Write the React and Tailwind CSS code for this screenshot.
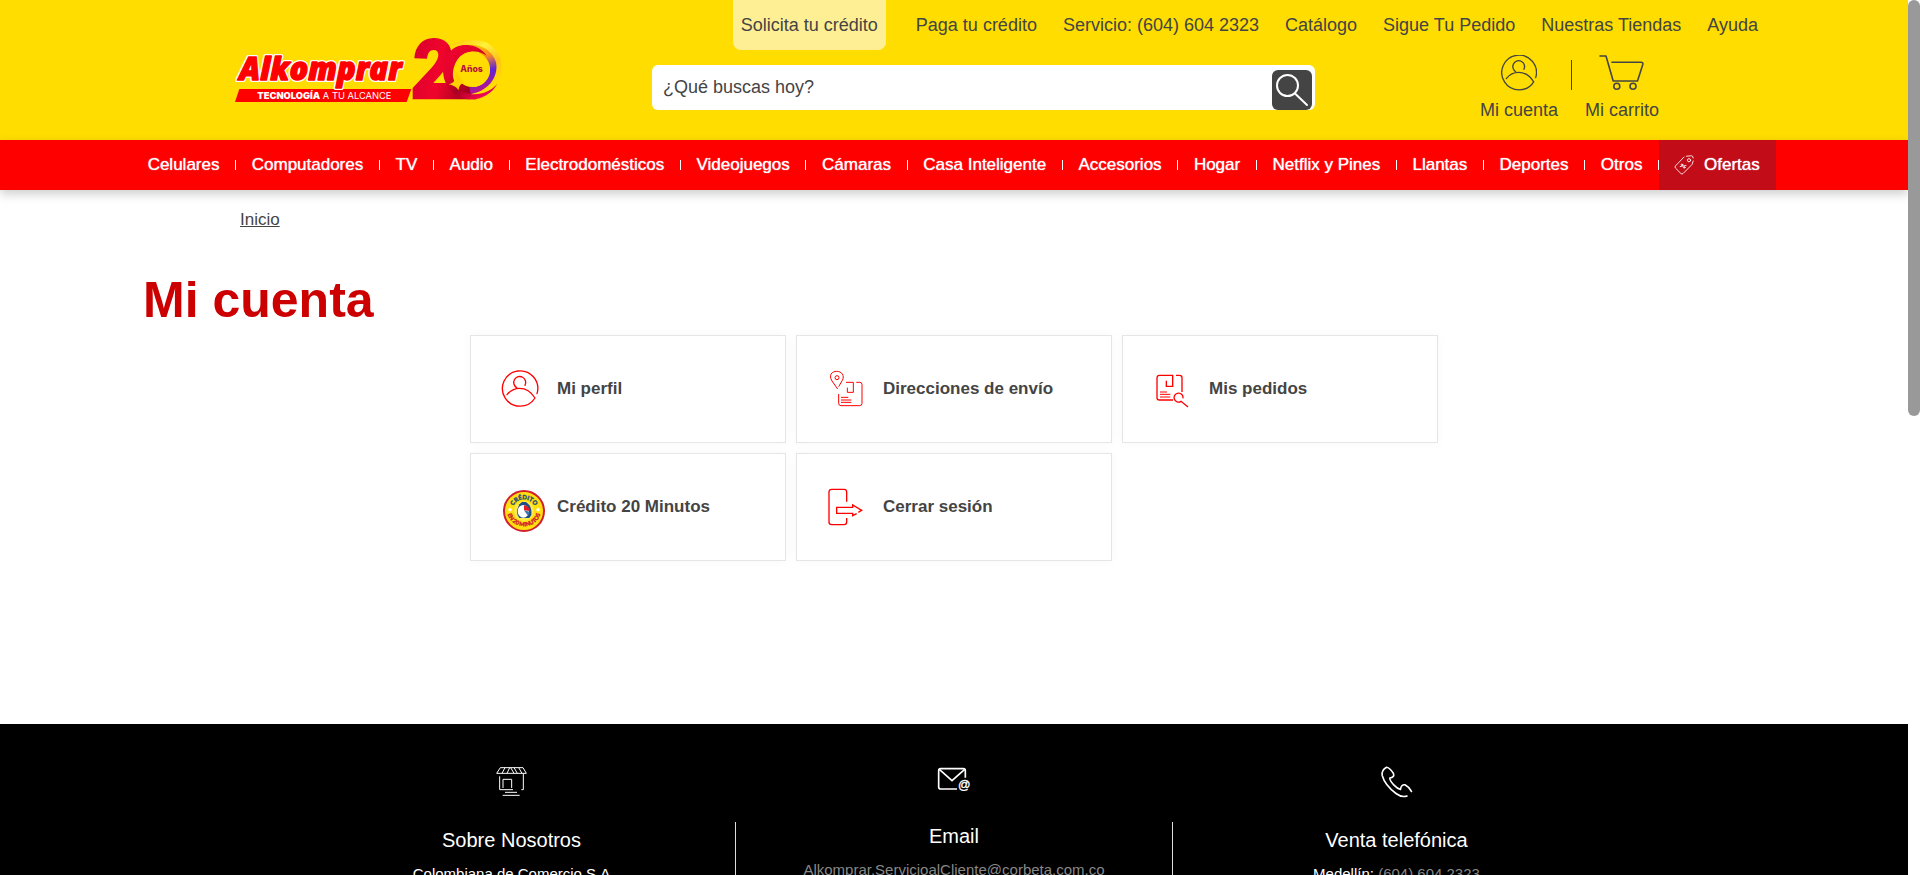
import React from "react";

const topLinks = [
  "Paga tu crédito",
  "Servicio: (604) 604 2323",
  "Catálogo",
  "Sigue Tu Pedido",
  "Nuestras Tiendas",
  "Ayuda",
];

const categories = [
  "Celulares",
  "Computadores",
  "TV",
  "Audio",
  "Electrodomésticos",
  "Videojuegos",
  "Cámaras",
  "Casa Inteligente",
  "Accesorios",
  "Hogar",
  "Netflix y Pines",
  "Llantas",
  "Deportes",
  "Otros",
];

function Logo() {
  return (
    <svg viewBox="45 30 819 210" className="h-[70px] w-[273px]" role="img" aria-label="Alkomprar 20 años">
      <defs>
        <linearGradient id="two" x1="0" y1="0" x2="1" y2="0.2">
          <stop offset="0" stopColor="#d8002c" />
          <stop offset="0.5" stopColor="#f0042c" />
          <stop offset="1" stopColor="#a3001f" />
        </linearGradient>
        <linearGradient id="ring" x1="0" y1="0" x2="1" y2="1">
          <stop offset="0" stopColor="#f2042f" />
          <stop offset="0.35" stopColor="#e3032d" />
          <stop offset="0.55" stopColor="#a8001f" />
          <stop offset="0.8" stopColor="#f0064a" />
          <stop offset="1" stopColor="#c8107a" />
        </linearGradient>
        <linearGradient id="sweep" x1="0" y1="0" x2="0.2" y2="1">
          <stop offset="0" stopColor="#ffd800" />
          <stop offset="0.35" stopColor="#ff8a1c" />
          <stop offset="0.65" stopColor="#5f22dc" />
          <stop offset="1" stopColor="#b5148c" />
        </linearGradient>
        <linearGradient id="halo" x1="0" y1="0" x2="0.4" y2="1">
          <stop offset="0" stopColor="#ffc400" />
          <stop offset="0.3" stopColor="#fff23a" />
          <stop offset="0.6" stopColor="#ffc21a" />
          <stop offset="1" stopColor="#ffe100" />
        </linearGradient>
      </defs>
      <polygon points="58,192 574,192 560,231 45,231" fill="#f00" />
      <g fontSize="93" fontWeight="800" fontStyle="italic" fontFamily='"Open Sans", sans-serif' fill="#f00" strokeLinejoin="round">
        <text x="58" y="165" stroke="#fff" strokeWidth="12" aria-hidden="true">
          Alkomprar
        </text>
        <text x="58" y="165" stroke="#f00" strokeWidth="4">
          Alkomprar
        </text>
      </g>
      <text x="112" y="221" fontSize="28" fontFamily="Inter, sans-serif" fill="#fff">
        <tspan fontWeight="900">TECNOLOGÍA</tspan>
        <tspan> A TU ALCANCE</tspan>
      </text>
      <path d="M583 100C585 64 607 39 641 39C675 39 696 61 694 90C692 116 672 139 640 174H770V223H578V189L634 129C647 114 655 101 655 89C655 80 650 75 641 75C629 75 623 85 621 101Z" fill="url(#two)" />
      <path d="M690 60C720 44 765 40 798 52C830 68 846 98 845 130C844 166 826 196 796 212C780 220 764 222 750 223L762 180C800 170 814 140 808 112C796 84 760 66 690 60Z" fill="url(#halo)" />
      <path d="M726 61C770 50 818 72 828 112C836 150 812 196 752 208L748 186C790 190 812 160 810 132C806 96 776 76 726 61Z" fill="url(#sweep)" />
      <path d="M740 60C700 58 670 90 669 134C669 186 706 223 752 223C786 223 816 206 832 176C812 200 778 212 748 206C722 200 706 184 700 160C694 122 716 86 752 80C770 77 788 82 800 92C786 72 766 61 740 60Z" fill="url(#ring)" />
      <circle cx="757" cy="133" r="53" fill="#ffdd00" />
      <path d="M706 140L707 160C704 170 696 176 686 178C699 180 708 185 716 196C716 184 722 178 732 172Z" fill="#ffd000" />
      <text x="721" y="140" fontSize="26" fontWeight="800" fontFamily="Inter, sans-serif" fill="#b5103a">
        Años
      </text>
    </svg>
  );
}

function UserCircle({ className, viewBox }) {
  return (
    <svg viewBox={viewBox} className={className} fill="none" stroke="currentColor" strokeWidth="4" strokeLinecap="round" aria-hidden="true">
      <path d="M231 206A53 53 0 1 0 225 219C213 200 197 190 179 190C164 190 150 198 141 209" />
      <path d="M195 181A18 18 0 1 0 170 188" />
    </svg>
  );
}

function Cart() {
  return (
    <svg viewBox="0 0 46 36" className="h-9 w-[46px]" fill="none" stroke="currentColor" strokeWidth="1.6" strokeLinejoin="round" strokeLinecap="round" aria-hidden="true">
      <path d="M1 1H7L14.2 26H38.500L43.8 9.500Q44.3 7.300 42 7.300H13" />
      <circle cx="17.8" cy="31.3" r="3" />
      <circle cx="34" cy="31.3" r="3" />
    </svg>
  );
}

function TagIcon() {
  return (
    <svg viewBox="0 0 20 20" className="h-5 w-5" fill="none" stroke="#fff" strokeOpacity="0.85" strokeWidth="1" strokeLinecap="round" strokeLinejoin="round" aria-hidden="true">
      <path d="M10 2L1.4 11Q.6 12 1.4 13L7 18.6Q8 19.4 9 18.6L18 9.5L19.2 6" />
      <path d="M12.5 1.2L17.5 .8Q19.2 .8 19.2 3" />
      <circle cx="15" cy="5.2" r="1.6" />
      <path d="M6.2 11.5L12 10.5" />
      <circle cx="8" cy="9.8" r="0.8" />
      <circle cx="10.2" cy="12.4" r="0.8" />
    </svg>
  );
}

function AddressIcon() {
  return (
    <svg viewBox="90 120 144 144" className="h-12 w-12" fill="none" stroke="#f00" strokeWidth="3" aria-hidden="true">
      <path d="M143 192L126 168C115 150 126 139 140 139C155 139 165 152 157 166L146 185" />
      <circle cx="141" cy="158" r="6" />
      <path d="M146 207V235Q146 242 153 242H209Q216 242 216 235V178Q216 172 209 172H199" />
      <path d="M168 172H190V202H172V188" />
      <path d="M153 217H175M153 225H184M153 232H184" />
    </svg>
  );
}

function OrdersIcon() {
  return (
    <svg viewBox="108 120 144 144" className="h-12 w-12" fill="none" stroke="#f00" strokeWidth="4" aria-hidden="true">
      <path d="M189 225H148Q141 225 141 218V159Q141 151 148 151H188V184H169V167" />
      <path d="M198 151H209Q216 151 216 158V201" />
      <path d="M150 201H171M150 208H181M150 216H181" strokeWidth="3" />
      <path d="M219 220A13.500 13.500 0 1 0 213 229L234 246" />
    </svg>
  );
}

function LogoutIcon() {
  return (
    <svg viewBox="90 474 144 144" className="h-12 w-12" fill="none" stroke="#f00" strokeWidth="4" aria-hidden="true">
      <path d="M170 530V501Q170 493 162 493H125Q117 493 117 501V591Q117 599 125 599H162Q170 599 170 591V579" />
      <path d="M205 562L215 556L188 540V547H140V565H188V572L200 566" />
    </svg>
  );
}

function CreditBadge() {
  return (
    <svg viewBox="102 474 144 144" className="h-12 w-12 overflow-visible" aria-hidden="true">
      <defs>
        <path id="badgeTop" d="M157 558A35 35 0 0 1 227 558" />
        <path id="badgeBottom" d="M141 553A51 51 0 0 0 243 553" />
      </defs>
      <circle cx="192" cy="558" r="60" fill="#ffdf10" stroke="#d0202e" strokeWidth="6" />
      <circle cx="192" cy="558" r="30" fill="#ffe94d" />
      <path d="M178 538L186 531H198L208 540Q216 552 214 570L208 579H178Q170 570 171 556Z" fill="#1d4f86" />
      <ellipse cx="190" cy="559" rx="17" ry="19" fill="#fff" />
      <path d="M192 556V541Q208 543 209 558Z" fill="#e01b24" />
      <path d="M192 556L209 560Q208 568 202 570Z" fill="#3b76b0" />
      <circle cx="150" cy="554" r="5" fill="#fff" />
      <circle cx="234" cy="554" r="5" fill="#fff" />
      <text fontSize="18" fontWeight="900" fontFamily="Lato, sans-serif" fill="#1c4a78" stroke="#1c4a78" strokeWidth="1" textAnchor="middle">
        <textPath href="#badgeTop" startOffset="50%">CRÉDITO</textPath>
      </text>
      <text fontSize="17" fontWeight="900" fontFamily="Lato, sans-serif" fill="#d0202e" stroke="#d0202e" strokeWidth="1" textAnchor="middle">
        <textPath href="#badgeBottom" startOffset="50%">EN 20 MINUTOS</textPath>
      </text>
    </svg>
  );
}

function StoreIcon() {
  return (
    <svg viewBox="306 66 120 120" className="h-10 w-10" fill="none" stroke="#fff" strokeWidth="3" aria-hidden="true">
      <path d="M331 83H399L409 100H320Z" />
      <path d="M345 83L336 100M359 83L351 100M362 83L372 100M372 83L382 100M386 83L396 100" />
      <path d="M329 109V149H369M400 101V149H394" />
      <path d="M339 144V118H365V144" />
      <path d="M345 157H381M338 166H389" />
    </svg>
  );
}

function MailIcon() {
  return (
    <svg viewBox="462 66 120 120" className="h-10 w-10" fill="none" stroke="#fff" strokeWidth="5" aria-hidden="true">
      <path d="M531 147H482Q476 147 476 141V92Q476 86 482 86H550Q556 86 556 92V113" />
      <path d="M478 88L516 122L554 88" />
      <text x="534" y="148" fontSize="37" fontFamily='"Liberation Sans", Arial, sans-serif' fill="#fff" strokeWidth="1">
        @
      </text>
    </svg>
  );
}

function PhoneIcon() {
  return (
    <svg viewBox="1 0 40 40" className="h-10 w-10" fill="none" stroke="#fff" strokeWidth="1.6" strokeLinecap="round" strokeLinejoin="round" aria-hidden="true">
      <path d="M31 34C28 35 24 34.500 20 31.500C14 27 8 20 6.200 13.500C5.600 10 7.500 7 10.500 5.300C12.500 5.300 15.500 8.500 17.500 11.500C18.500 14.500 16.500 15.500 13.800 16C14 20 20.500 26.500 24.500 27.500C24.800 24 26.500 22.500 29 22.800C31.500 24 34 27 35.500 29.500" />
    </svg>
  );
}

const cards = [
  { label: "Mi perfil", icon: <UserCircle viewBox="102 120 144 144" className="h-12 w-12 text-[#ff0000]" /> },
  { label: "Direcciones de envío", icon: <AddressIcon /> },
  { label: "Mis pedidos", icon: <OrdersIcon /> },
  { label: "Crédito 20 Minutos", icon: <CreditBadge /> },
  { label: "Cerrar sesión", icon: <LogoutIcon /> },
];

function Header() {
  return (
    <header className="bg-[#ffdd00]">
      <div className="mx-auto flex h-[140px] max-w-[1644px]">
        <div className="w-[520px] shrink-0 pt-[35px] pl-[103px]">
          <a href="#inicio" className="block w-[273px]">
            <Logo />
          </a>
        </div>
        <div className="flex-1">
          <nav aria-label="Servicios" className="flex h-[50px] justify-end gap-[26px] pr-[18px] whitespace-nowrap">
            <a href="#solicita" className="mr-1 rounded-b-lg bg-[#ffef94] px-2 leading-[50px]">
              Solicita tu crédito
            </a>
            {topLinks.map((t) => (
              <a key={t} href="#enlace" className="leading-[50px]">
                {t}
              </a>
            ))}
          </nav>
          <div className="flex items-start justify-between pt-[5px] pr-[117px]">
            <form className="mt-[10px] flex h-[45px] w-[663px] rounded-md bg-white pr-[3px]" onSubmit={(e) => e.preventDefault()}>
              <input
                type="text"
                aria-label="Buscar"
                placeholder="¿Qué buscas hoy?"
                className="h-[45px] flex-1 bg-transparent px-[11px] text-[#444] outline-none placeholder:text-[#444]"
              />
              <button type="submit" aria-label="Buscar" className="h-10 w-10 self-end rounded-md bg-[#444]">
                <svg viewBox="0 0 40 40" className="h-10 w-10" fill="none" stroke="#fff" strokeWidth="2" strokeLinecap="round" aria-hidden="true">
                  <circle cx="15.500" cy="15.500" r="10.500" />
                  <path d="M23.500 24L35 35" />
                </svg>
              </button>
            </form>
            <div className="flex gap-[13px] whitespace-nowrap">
              <a href="#cuenta" className="flex flex-col items-center gap-[6px]">
                <UserCircle viewBox="125 137 110 110" className="h-9 w-9" />
                <span className="leading-[26px]">Mi cuenta</span>
              </a>
              <span className="mt-[5px] h-[30px] w-px bg-[#444]" />
              <a href="#carrito" className="flex flex-col items-center gap-[6px]">
                <Cart />
                <span className="leading-[26px]">Mi carrito</span>
              </a>
            </div>
          </div>
        </div>
      </div>
    </header>
  );
}

function CategoryBar() {
  return (
    <nav aria-label="Categorías" className="bg-[#ff0000] text-white shadow-[0_4px_10px_rgba(0,0,0,0.2)]">
      <ul className="mx-auto flex h-[50px] max-w-[1644px] items-center text-[17px] whitespace-nowrap [text-shadow:0_0_1px_#fff]">
        {categories.map((c) => (
          <li key={c} className="flex flex-auto items-center">
            <a href="#categoria" className="flex-1 text-center">
              {c}
            </a>
            <span className="h-[10px] w-px bg-white" />
          </li>
        ))}
        <li className="h-full">
          <a href="#ofertas" className="flex h-full w-[117px] items-center gap-[10px] bg-[#c20d18] pl-[15px]">
            <TagIcon />
            Ofertas
          </a>
        </li>
      </ul>
    </nav>
  );
}

function Footer() {
  return (
    <footer className="flex-1 bg-black pt-[38px] text-[15px] leading-5 text-white">
      <div className="mx-auto grid h-full max-w-[1332px] grid-cols-[1fr_438px_1fr] text-center">
        <section className="flex flex-col items-center">
          <StoreIcon />
          <div className="mt-5 w-full pt-[6px]">
            <h2 className="text-xl leading-6">Sobre Nosotros</h2>
            <p className="mt-3">Colombiana de Comercio S.A</p>
          </div>
        </section>
        <section className="flex flex-col items-center">
          <MailIcon />
          <div className="mt-5 w-full flex-1 border-x border-[#ddd] pt-[2px]">
            <h2 className="text-xl leading-6">Email</h2>
            <p className="mt-3">
              <a href="#email" className="text-[#888]">
                Alkomprar.ServicioalCliente@corbeta.com.co
              </a>
            </p>
          </div>
        </section>
        <section className="flex flex-col items-center">
          <PhoneIcon />
          <div className="mt-5 w-full pt-[6px]">
            <h2 className="text-xl leading-6">Venta telefónica</h2>
            <p className="mt-3">
              Medellín:{" "}
              <a href="#telefono" className="text-[#888]">
                (604) 604 2323
              </a>
            </p>
          </div>
        </section>
      </div>
    </footer>
  );
}

export default function App() {
  return (
    <div className="flex h-screen overflow-hidden bg-white font-['Liberation_Sans',Arial,sans-serif] text-[18px] text-[#444]">
      <div className="flex min-w-0 flex-1 flex-col">
        <Header />
        <CategoryBar />
        <main className="h-[534px] shrink-0 pt-4">
          <div className="mx-auto max-w-[1622px]">
            <nav aria-label="Ruta" className="pl-[97px] leading-[27px]">
              <a href="#inicio" className="text-[17px] underline">
                Inicio
              </a>
            </nav>
            <h1 className="mt-[37px] text-[50px] leading-[60px] font-bold text-[#cc0000]">Mi cuenta</h1>
          </div>
          <div className="mx-auto mt-[5px] grid max-w-[968px] grid-cols-3 gap-[10px]">
            {cards.map((c) => (
              <a
                key={c.label}
                href="#opcion"
                className="flex h-[108px] items-center gap-[15px] border border-[#e6e6e6] bg-white pl-[23px] text-[17px] font-bold shadow-[0_0_10px_rgba(0,0,0,0.03)]"
              >
                {c.icon}
                {c.label}
              </a>
            ))}
          </div>
        </main>
        <Footer />
      </div>
      <div className="w-3 shrink-0 bg-white" aria-hidden="true">
        <div className="h-[416px] rounded-full bg-[#999]" />
      </div>
    </div>
  );
}
